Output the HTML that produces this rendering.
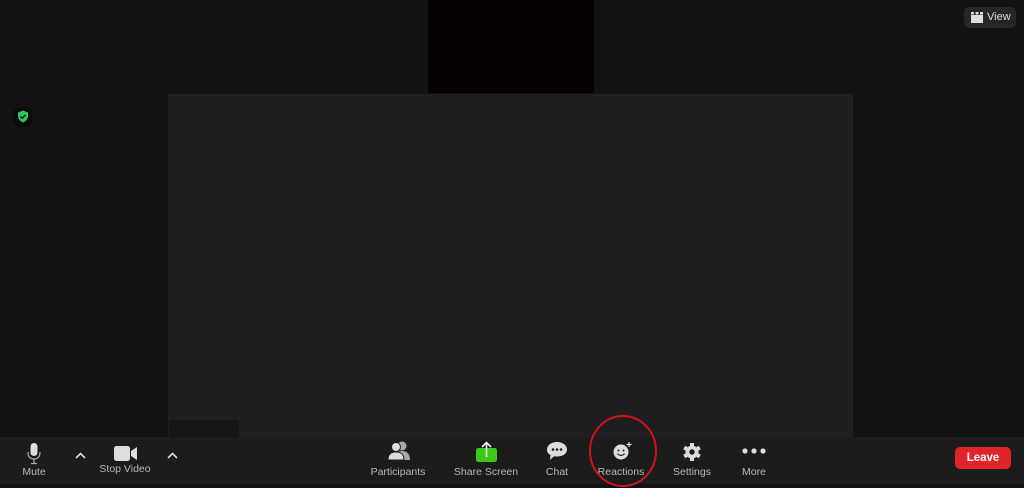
<!DOCTYPE html>
<html><head><meta charset="utf-8"><style>
*{margin:0;padding:0;box-sizing:border-box}
body{width:1024px;height:484px;background:#121212;position:relative;overflow:hidden;font-family:"Liberation Sans","DejaVu Sans",sans-serif}
.abs{position:absolute}
.main{left:168px;top:94px;width:685px;height:343px;background:#1f1f1f}
.top{left:428px;top:0;width:166px;height:93px;background:#070102}
.bar{left:0;top:437px;width:1024px;height:47px;background:#1c1c1c}
.lbl{position:absolute;color:#b8b8b8;font-size:10.5px;white-space:nowrap;transform:translateX(-50%)}
.ico{position:absolute}
</style></head><body>
<div class="abs top"></div>
<div class="abs main"></div>
<div class="abs" style="left:169px;top:420px;width:70px;height:17px;background:#151515"></div>
<div class="abs" style="left:14px;top:108px;width:18px;height:18px;background:#0a0a0a;border-radius:4px"></div>
<svg class="abs" style="left:17px;top:110px" width="12" height="13" viewBox="0 0 12 13"><path d="M6 0.5 L11 2.5 V6 C11 9 8.5 11.5 6 12.5 C3.5 11.5 1 9 1 6 V2.5Z" fill="#2fc35b"/><path d="M3.5 6.5 L5.3 8.2 L8.5 4.8" stroke="#0a0a0a" stroke-width="1.3" fill="none"/></svg>
<div class="abs" style="left:964px;top:7px;width:52px;height:21px;background:#262626;border-radius:5px"></div>
<svg class="abs" style="left:971px;top:12px" width="12" height="11" viewBox="0 0 12 11"><rect x="0" y="3" width="12" height="8" fill="#ddd"/><rect x="0" y="0" width="3" height="2.5" fill="#ddd"/><rect x="4.5" y="0" width="3" height="2.5" fill="#ddd"/><rect x="9" y="0" width="3" height="2.5" fill="#ddd"/></svg>
<div class="abs" style="left:987px;top:11px;color:#ddd;font-size:11px">View</div>
<div class="abs bar"></div>
<!-- mute -->
<svg class="ico" style="left:27px;top:443px" width="14" height="22" viewBox="0 0 14 22"><rect x="3.5" y="0" width="7" height="13" rx="3.5" fill="#ddd"/><path d="M1 9 C1 14 3.5 16 7 16 C10.5 16 13 14 13 9" stroke="#aaa" stroke-width="1.2" fill="none"/><path d="M7 16 V20 M4 20.5 H10" stroke="#aaa" stroke-width="1.2"/></svg>
<div class="lbl" style="left:34px;top:466px">Mute</div>
<svg class="ico" style="left:75px;top:452px" width="11" height="7" viewBox="0 0 11 7"><path d="M1 6 L5.5 1.5 L10 6" stroke="#ddd" stroke-width="1.6" fill="none"/></svg>
<svg class="ico" style="left:114px;top:446px" width="24" height="15" viewBox="0 0 24 15"><rect x="0" y="0" width="16" height="15" rx="2.5" fill="#ddd"/><path d="M17 5 L23 1 V14 L17 10Z" fill="#ddd"/></svg>
<div class="lbl" style="left:125px;top:463px">Stop Video</div>
<svg class="ico" style="left:167px;top:452px" width="11" height="7" viewBox="0 0 11 7"><path d="M1 6 L5.5 1.5 L10 6" stroke="#ddd" stroke-width="1.6" fill="none"/></svg>
<!-- participants -->
<svg class="ico" style="left:387px;top:441px" width="24" height="20" viewBox="0 0 24 20"><circle cx="15" cy="5" r="4.5" fill="#aaa"/><path d="M8 19 C8 12 11 10 15 10 C19 10 23 12 23 19Z" fill="#aaa"/><circle cx="9" cy="6" r="4.5" fill="#ddd" stroke="#1c1c1c" stroke-width="1"/><path d="M1 19 C1 13 4 11 9 11 C14 11 17 13 17 19Z" fill="#ddd" stroke="#1c1c1c" stroke-width="1"/></svg>
<div class="lbl" style="left:398px;top:466px">Participants</div>
<!-- share -->
<svg class="ico" style="left:476px;top:441px" width="21" height="21" viewBox="0 0 21 21"><rect x="0" y="7" width="21" height="14" rx="2.5" fill="#3ec619"/><path d="M10.5 16 V2 M6 6 L10.5 1.5 L15 6" stroke="#e6ffe0" stroke-width="1.6" fill="none"/></svg>
<div class="lbl" style="left:486px;top:466px">Share Screen</div>
<!-- chat -->
<svg class="ico" style="left:546px;top:441px" width="22" height="20" viewBox="0 0 22 20"><path d="M11 1 C17 1 21 4.5 21 8.5 C21 12.5 17 15.5 11 15.5 C10 15.5 9 15.4 8 15.2 L4 19 L4.5 14 C2 12.8 1 11 1 8.5 C1 4.5 5 1 11 1Z" fill="#ddd"/><circle cx="7" cy="8.5" r="1.3" fill="#1c1c1c"/><circle cx="11" cy="8.5" r="1.3" fill="#1c1c1c"/><circle cx="15" cy="8.5" r="1.3" fill="#1c1c1c"/></svg>
<div class="lbl" style="left:557px;top:466px">Chat</div>
<!-- reactions -->
<svg class="ico" style="left:612px;top:441px" width="21" height="20" viewBox="0 0 21 20"><circle cx="9" cy="11" r="7.5" fill="#ddd"/><circle cx="6.5" cy="9.5" r="1" fill="#1c1c1c"/><circle cx="11.5" cy="9.5" r="1" fill="#1c1c1c"/><path d="M5.5 12.5 C7 15 11 15 12.5 12.5" stroke="#1c1c1c" stroke-width="1.2" fill="none"/><path d="M17 1 V6 M14.5 3.5 H19.5" stroke="#ddd" stroke-width="1.2"/></svg>
<div class="lbl" style="left:621px;top:466px">Reactions</div>
<svg class="abs" style="left:588px;top:413px" width="70" height="75" viewBox="0 0 70 75"><ellipse cx="35" cy="38" rx="33" ry="35" stroke="#d2141a" stroke-width="2" fill="none"/></svg>
<!-- settings -->
<svg class="ico" style="left:683px;top:443px" width="18" height="18" viewBox="0 0 18 18"><g fill="#ddd" transform="translate(9 9)"><circle r="6.5"/><rect x="-2" y="-9" width="4" height="18"/><rect x="-2" y="-9" width="4" height="18" transform="rotate(60)"/><rect x="-2" y="-9" width="4" height="18" transform="rotate(120)"/></g><circle cx="9" cy="9" r="2.7" fill="#1c1c1c"/></svg>
<div class="lbl" style="left:692px;top:466px">Settings</div>
<svg class="ico" style="left:742px;top:448px" width="24" height="6" viewBox="0 0 24 6"><circle cx="3" cy="3" r="2.6" fill="#ddd"/><circle cx="12" cy="3" r="2.6" fill="#ddd"/><circle cx="21" cy="3" r="2.6" fill="#ddd"/></svg>
<div class="lbl" style="left:754px;top:466px">More</div>
<div class="abs" style="left:955px;top:447px;width:56px;height:22px;background:#e0232a;border-radius:5px;color:#fff;font-size:11.5px;font-weight:bold;text-align:center;line-height:22px">Leave</div>
</body></html>
